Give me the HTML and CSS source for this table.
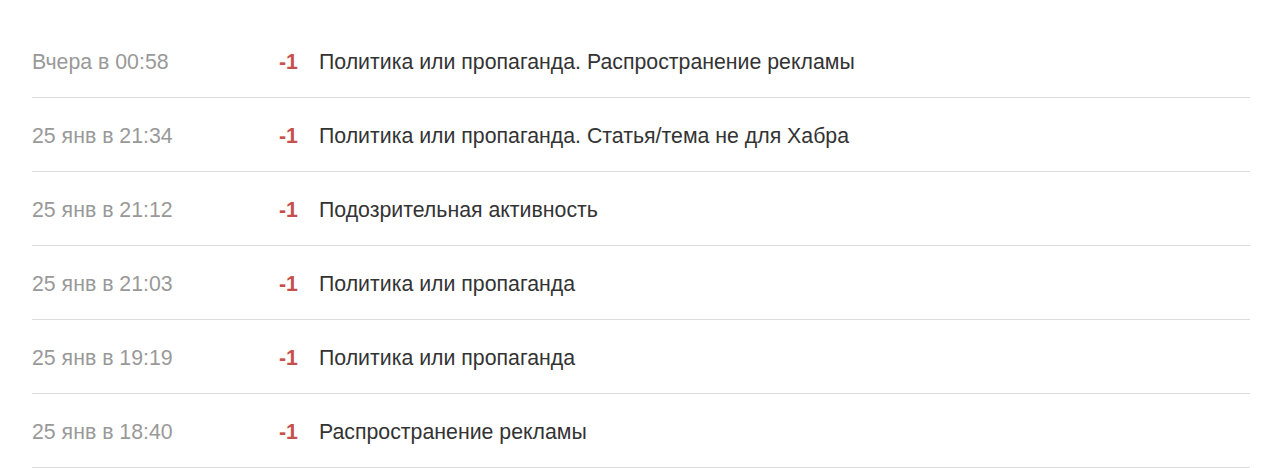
FILE: index.html
```html
<!DOCTYPE html>
<html lang="ru">
<head>
<meta charset="utf-8">
<link rel="stylesheet" href="styles.css">
</head>
<body>
<ul class="list">
  <li class="row"><span class="date">Вчера в 00:58</span><span class="score">-1</span><span class="reason">Политика или пропаганда. Распространение рекламы</span></li>
  <li class="row"><span class="date">25 янв в 21:34</span><span class="score">-1</span><span class="reason">Политика или пропаганда. Статья/тема не для Хабра</span></li>
  <li class="row"><span class="date">25 янв в 21:12</span><span class="score">-1</span><span class="reason">Подозрительная активность</span></li>
  <li class="row"><span class="date">25 янв в 21:03</span><span class="score">-1</span><span class="reason">Политика или пропаганда</span></li>
  <li class="row"><span class="date">25 янв в 19:19</span><span class="score">-1</span><span class="reason">Политика или пропаганда</span></li>
  <li class="row"><span class="date">25 янв в 18:40</span><span class="score">-1</span><span class="reason">Распространение рекламы</span></li>
</ul>
</body>
</html>
```
FILE: styles.css
```css
html, body {
  margin: 0;
  padding: 0;
  background: #fff;
}
body {
  font-family: "Liberation Sans", Arial, sans-serif;
  font-size: 21.3px;
  color: #333;
}
.list {
  list-style: none;
  margin: 0;
  padding: 24px 30px 0 32px;
}
.row {
  display: flex;
  align-items: center;
  padding: 26px 0 23px;
  line-height: 24px;
  border-bottom: 1px solid #dcdcdc;
}
.date {
  width: 247px;
  flex: none;
  color: #999;
}
.score {
  width: 40px;
  flex: none;
  color: #c8504c;
  font-weight: bold;
}
.reason {
  color: #333;
}
```
